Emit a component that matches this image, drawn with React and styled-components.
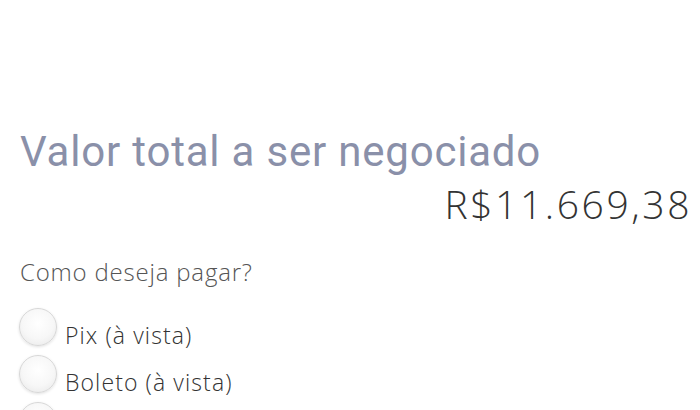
import styled, { createGlobalStyle } from "styled-components";

const GlobalStyle = createGlobalStyle`
  body {
    margin: 0;
    background: #ffffff;
  }
`;

const Page = styled.div`
  width: 700px;
  height: 410px;
  overflow: hidden;
  padding: 127px 8px 0 20px;
  box-sizing: border-box;
`;

const Title = styled.h2`
  margin: 0;
  font-family: Roboto, "Liberation Sans", sans-serif;
  font-weight: 400;
  font-size: 42px;
  line-height: 50px;
  letter-spacing: 0.8px;
  color: #8a90a9;
`;

const Total = styled.div`
  margin-top: 3px;
  text-align: right;
  font-family: "Open Sans", "Liberation Sans", sans-serif;
  font-weight: 300;
  font-size: 39px;
  line-height: 48px;
  letter-spacing: 2.6px;
  color: #333333;
`;

const Question = styled.p`
  margin: 28px 0 0;
  font-family: "Open Sans", "Liberation Sans", sans-serif;
  font-weight: 300;
  font-size: 24px;
  line-height: 32px;
  letter-spacing: 0.8px;
  color: #555555;
`;

const Options = styled.div`
  display: flex;
  flex-direction: column;
  gap: 9px;
  margin-top: 20px;
`;

const Option = styled.label`
  display: flex;
  align-items: flex-end;
  gap: 8px;
  font-family: "Open Sans", "Liberation Sans", sans-serif;
  font-weight: 300;
  font-size: 23px;
  line-height: 22px;
  letter-spacing: 1.1px;
  color: #333333;
  cursor: pointer;
`;

const Radio = styled.input.attrs({ type: "radio" })`
  appearance: none;
  margin: 0 0 0 -1px;
  width: 38px;
  height: 38px;
  flex-shrink: 0;
  border-radius: 50%;
  border: 1px solid #d8d8d8;
  background: radial-gradient(circle at 50% 40%, #ffffff 0%, #f7f7f7 55%, #e6e6e6 100%);
  box-shadow: 0 1px 3px rgba(0, 0, 0, 0.12);
  box-sizing: border-box;
  cursor: pointer;
`;

const payments = ["Pix (à vista)", "Boleto (à vista)", "Cartão de crédito"];

export default function App() {
  return (
    <>
      <GlobalStyle />
      <Page>
        <Title>Valor total a ser negociado</Title>
        <Total>R$11.669,38</Total>
        <Question>Como deseja pagar?</Question>
        <Options>
          {payments.map((p) => (
            <Option key={p}>
              <Radio name="pagamento" value={p} />
              <span>{p}</span>
            </Option>
          ))}
        </Options>
      </Page>
    </>
  );
}
